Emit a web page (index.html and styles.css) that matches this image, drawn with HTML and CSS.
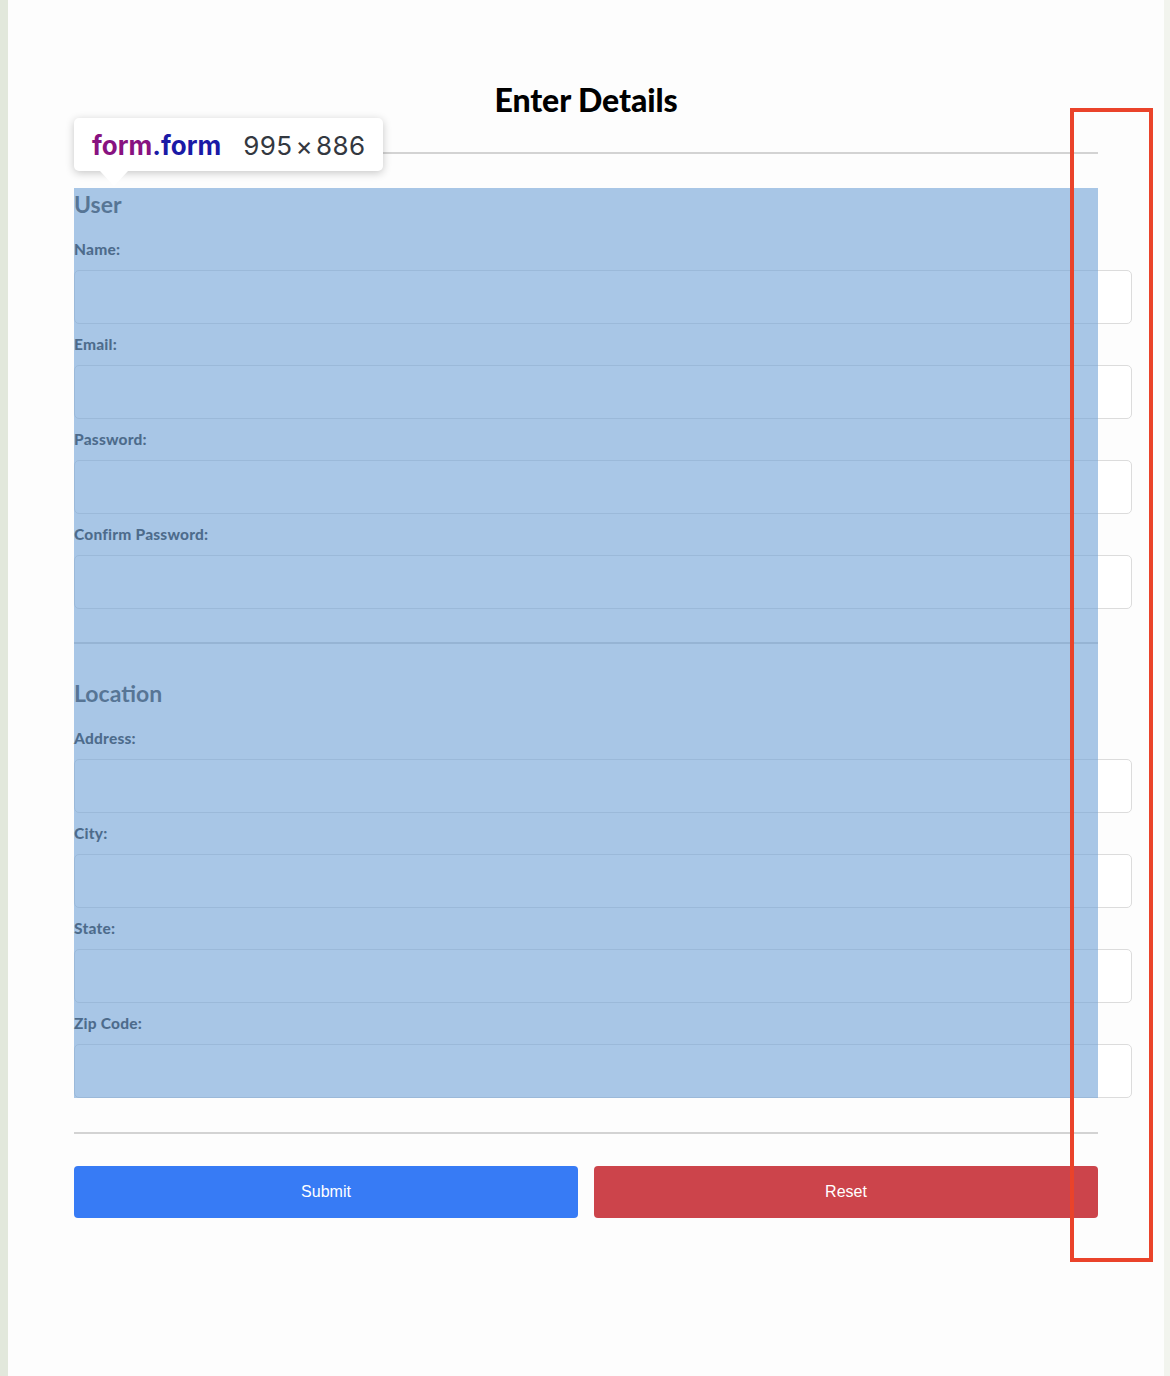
FILE: index.html
```html
<!DOCTYPE html>
<html lang="en">
<head>
<meta charset="utf-8">
<title>Enter Details</title>
<link rel="stylesheet" href="styles.css">
</head>
<body>
<div class="page">
  <h1 class="title">Enter Details</h1>
  <hr class="rule rule-top">
  <form class="form">
    <fieldset class="group group-user">
      <legend class="legend">User</legend>
      <label class="label">Name:</label>
      <input class="input" type="text">
      <label class="label">Email:</label>
      <input class="input" type="email">
      <label class="label">Password:</label>
      <input class="input" type="password">
      <label class="label">Confirm Password:</label>
      <input class="input" type="password">
    </fieldset>
    <fieldset class="group group-location">
      <legend class="legend">Location</legend>
      <label class="label">Address:</label>
      <input class="input" type="text">
      <label class="label">City:</label>
      <input class="input" type="text">
      <label class="label">State:</label>
      <input class="input" type="text">
      <label class="label">Zip Code:</label>
      <input class="input" type="text">
    </fieldset>
    <div class="highlight"></div>
    <div class="tip">
      <span class="tip-tag">form</span><span class="tip-cls">.form</span>
      <span class="tip-size">995<span class="tip-x">×</span>886</span>
      <span class="tip-arrow"></span>
    </div>
  </form>
  <hr class="rule rule-bottom">
  <div class="actions">
    <button class="btn btn-submit" type="button">Submit</button>
    <button class="btn btn-reset" type="button">Reset</button>
  </div>
  <div class="marker"></div>
</div>
</body>
</html>
```
FILE: styles.css
```css
html, body {
  margin: 0;
  padding: 0;
}
body {
  background: #fdfdfd;
  border-left: 8px solid #e2e8dc;
  border-right: 6px solid #f2f4ee;
  min-height: 1376px;
  box-sizing: border-box;
}
.page {
  position: relative;
  padding: 80px 66px 0;
  min-height: 1296px;
}
.title {
  margin: 0;
  text-align: center;
  font-family: "Lato", "Open Sans", sans-serif;
  font-weight: 900;
  font-size: 32px;
  line-height: 40px;
  color: #000;
  letter-spacing: -0.1px;
}
.rule {
  border: 0;
  height: 2px;
  background: #d3d3d3;
  margin: 0;
}
.rule-top {
  margin-top: 32px;
}
.form {
  position: relative;
  margin-top: 34px;
}
.group {
  border: 0;
  margin: 0;
  padding: 0;
  min-width: 0;
  display: flex;
  flex-direction: column;
  align-items: flex-start;
}
.group-user {
  padding-bottom: 33px;
  border-bottom: 2px solid #d0d0d0;
}
.group-location {
  margin-top: 33px;
}
.legend {
  padding: 0;
  font-family: "Lato", "Open Sans", sans-serif;
  font-weight: 700;
  font-size: 23px;
  line-height: 32px;
  color: #333;
  float: left;
}
.label {
  display: block;
  font-family: "Lato", "Open Sans", sans-serif;
  font-weight: 900;
  font-size: 15.5px;
  line-height: 20px;
  color: #1a1a1a;
  margin-top: 10px;
  letter-spacing: 0.2px;
}
.legend + .label {
  margin-top: 19px;
}
.input {
  display: block;
  margin: 11px 0 0;
  box-sizing: border-box;
  width: calc(100% + 34px);
  height: 54px;
  border: 1px solid #dcdcdc;
  border-radius: 5px;
  background: #fff;
}
.highlight {
  position: absolute;
  inset: 0;
  background: rgba(111, 161, 215, 0.6);
}
.tip {
  position: absolute;
  left: 0;
  top: -70px;
  width: 309px;
  height: 53px;
  box-sizing: border-box;
  background: #fff;
  border-radius: 5px;
  box-shadow: 0 2px 8px rgba(0, 0, 0, 0.22);
  display: flex;
  align-items: center;
  padding-left: 18px;
  padding-top: 2px;
  font-family: "Inter", "Roboto", sans-serif;
  font-size: 26px;
  white-space: pre;
}
.tip-tag {
  color: #881280;
  font-weight: 700;
}
.tip-cls {
  color: #1a1aa6;
  font-weight: 700;
}
.tip-size {
  color: #333840;
  margin-left: 22px;
  letter-spacing: 0.4px;
}
.tip-x {
  margin: 0 3px;
}
.tip-arrow {
  position: absolute;
  left: 26px;
  top: 53px;
  width: 0;
  height: 0;
  border-left: 14px solid transparent;
  border-right: 14px solid transparent;
  border-top: 15px solid #fff;
}
.rule-bottom {
  margin-top: 34px;
}
.actions {
  margin-top: 32px;
  display: flex;
  gap: 16px;
}
.btn {
  flex: 1;
  height: 52px;
  border: 0;
  border-radius: 4px;
  font-family: "Liberation Sans", Arial, sans-serif;
  font-size: 16px;
  color: #fff;
}
.btn-submit {
  background: #377bf5;
}
.btn-reset {
  background: #cc444b;
}
.marker {
  position: absolute;
  left: 1062px;
  top: 108px;
  width: 83px;
  height: 1154px;
  box-sizing: border-box;
  border: 4px solid #ea432a;
}
```
